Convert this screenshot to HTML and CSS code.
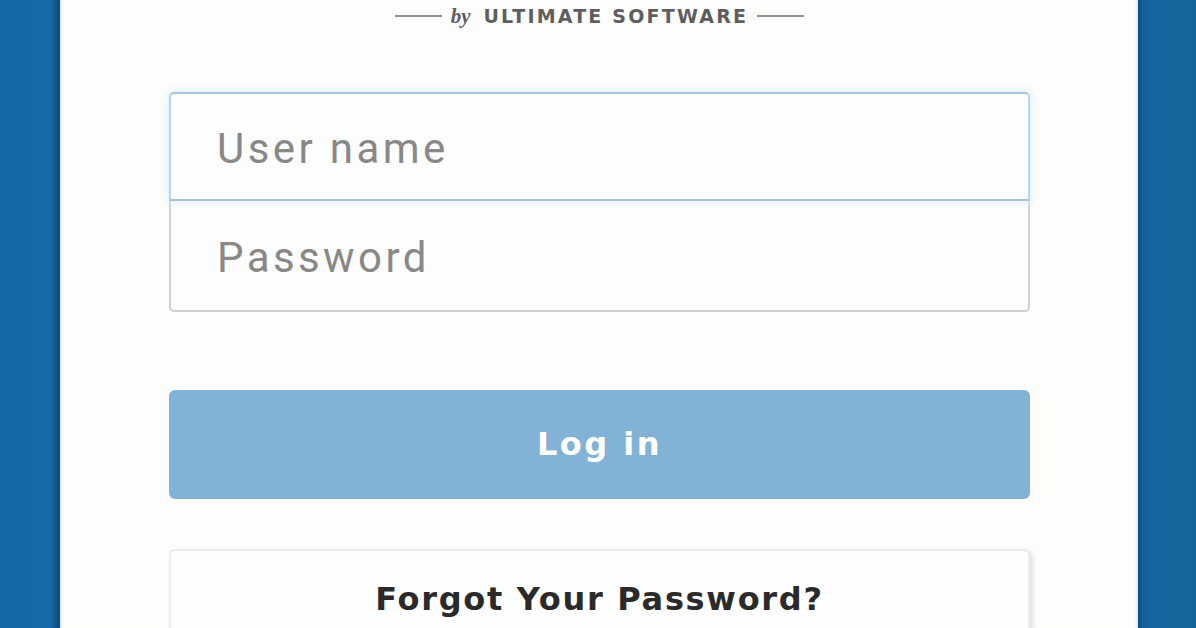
FILE: index.html
```html
<!DOCTYPE html>
<html>
<head>
    <title>Log in</title>
    <link rel="stylesheet" href="styles.css">
</head>
<body>
    <div class="side side-left"></div>
    <div class="card">
        <div class="brand">
            <span class="brand-rule"></span>
            <span class="brand-text"><em>by</em> ULTIMATE SOFTWARE</span>
            <span class="brand-rule"></span>
        </div>

        <form class="login-form" onsubmit="return false">
            <div class="field-group">
                <input type="text" class="field focused" placeholder="User name">
                <input type="password" class="field" placeholder="Password">
            </div>
            <button type="submit" class="login-btn">Log in</button>
        </form>

        <a href="#" class="forgot">Forgot Your Password?</a>
    </div>
    <div class="side side-right"></div>
</body>
</html>
```

FILE: styles.css
```css
html, body {
    height: 100%;
}
body {
    margin: 0;
    display: flex;
    overflow: hidden;
    background-color: #15679f;
    font-family: Roboto, "Liberation Sans", sans-serif;
}
.side {
    flex: none;
    height: 100%;
}
.side-left {
    width: 60px;
    background: linear-gradient(to right, #1769a6 0%, #176aa5 85%, #0f5086 95%, #0c4a7c 100%);
}
.side-right {
    width: 58px;
    background: linear-gradient(to right, #0d4d80 0%, #125e98 8%, #16679f 30%, #15659c 100%);
}
.card {
    flex: 1;
    background-color: #fdfdfc;
    padding: 0 108px 0 109px;
    box-shadow: inset 3px 0 2px -1px #d9f1fb, inset -3px 0 2px -1px #d9f1fb;
}

/* logo strip at the top of the card */
.brand {
    height: 32px;
    display: flex;
    align-items: center;
    justify-content: center;
    gap: 9px;
    color: #5e5e5e;
}
.brand-rule {
    width: 47px;
    height: 2px;
    background-color: #8f8f8f;
}
.brand-text {
    font-family: "DejaVu Sans", sans-serif;
    font-weight: bold;
    font-size: 19px;
    letter-spacing: 2.2px;
    white-space: nowrap;
}
.brand-text em {
    font-family: "Liberation Serif", serif;
    font-size: 21px;
    letter-spacing: 0;
    margin-right: 4px;
}

.login-form {
    margin-top: 60px;
}
.field-group {
    display: flex;
    flex-direction: column;
    border-radius: 5px;
}
.field {
    display: block;
    box-sizing: border-box;
    width: 100%;
    height: 109px;
    margin: 0;
    padding: 4px 0 0 46px;
    background-color: #fdfdfd;
    border: 2px solid #cfcfcf;
    font-family: Roboto, sans-serif;
    font-size: 42px;
    letter-spacing: 3.4px;
    color: #444;
    outline: none;
}
.field::placeholder {
    color: #888;
}
.field:first-child {
    border-radius: 5px 5px 0 0;
}
.field:last-child {
    border-top: none;
    border-radius: 0 0 5px 5px;
    height: 111px;
}
.field.focused {
    border-color: #a9c4da;
    border-left-color: #b7d6ee;
    border-right-color: #b7d6ee;
    box-shadow: 0 0 10px 2px #e3f1fb;
    position: relative;
}

.login-btn {
    display: block;
    width: 100%;
    height: 109px;
    margin-top: 78px;
    border: none;
    border-radius: 6px;
    background-color: #82b3d6;
    color: #fff;
    font-family: "DejaVu Sans", sans-serif;
    font-weight: bold;
    font-size: 32px;
    letter-spacing: 2.5px;
    padding-bottom: 2px;
    cursor: pointer;
}

.forgot {
    display: block;
    margin-top: 50px;
    height: 100px;
    box-sizing: border-box;
    padding-top: 29px;
    border: 2px solid #ececec;
    border-radius: 6px;
    box-shadow: 3px 2px 5px #e2e2e2;
    background-color: #fefefe;
    text-align: center;
    text-decoration: none;
    color: #2a2a2a;
    font-family: "DejaVu Sans", sans-serif;
    font-weight: bold;
    font-size: 32px;
    letter-spacing: 1.7px;
    white-space: nowrap;
}
```
